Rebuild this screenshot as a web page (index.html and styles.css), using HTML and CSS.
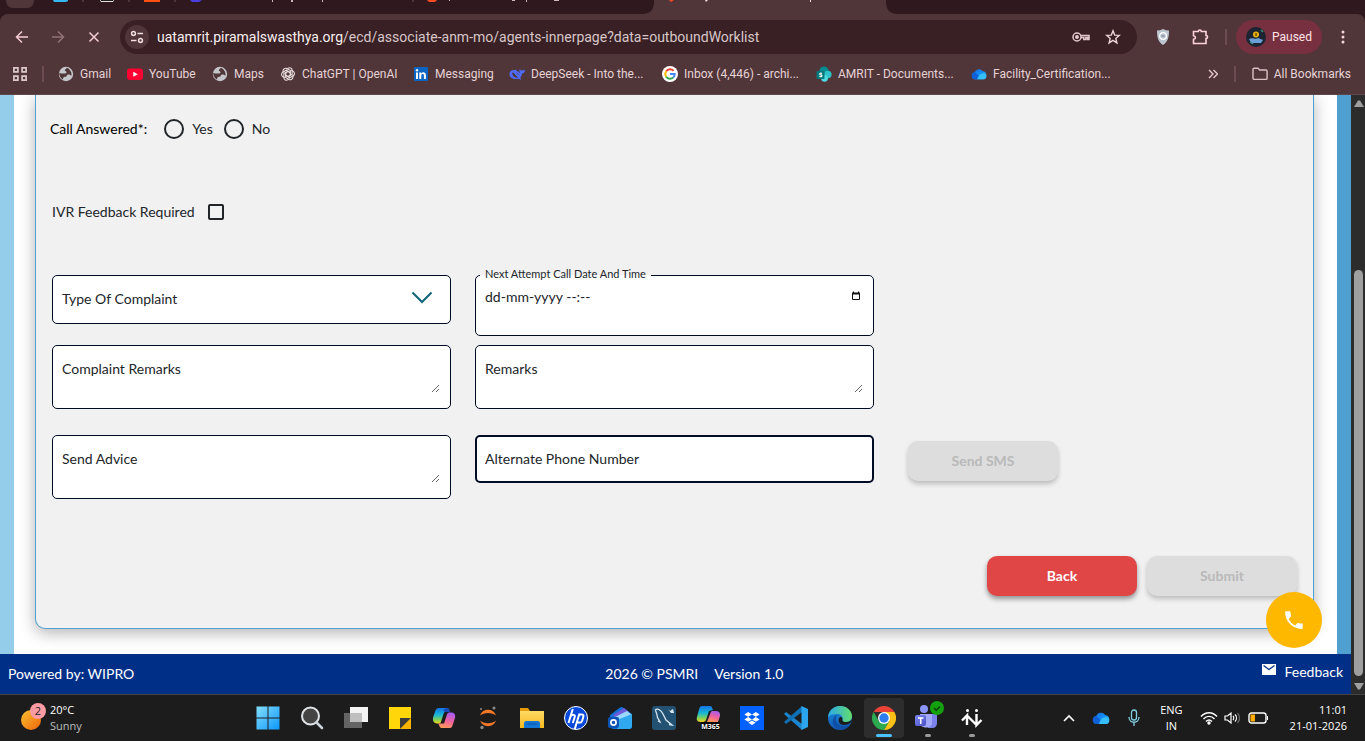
FILE: index.html
```html
<!DOCTYPE html>
<html lang="en">
<head>
<meta charset="utf-8">
<meta name="viewport" content="width=device-width, initial-scale=1">
<title>AMRIT - Outbound Worklist</title>
<link rel="stylesheet" href="styles.css">
</head>
<body>
<svg class="defs" width="0" height="0" aria-hidden="true">
  <defs>
    <linearGradient id="sun" x1="0" y1="0" x2="1" y2="1"><stop offset="0" stop-color="#f9c032"/><stop offset="1" stop-color="#f0640a"/></linearGradient>
    <linearGradient id="win" x1="0" y1="0" x2="1" y2="1"><stop offset="0" stop-color="#84deff"/><stop offset="1" stop-color="#0c98fa"/></linearGradient>
    <linearGradient id="cloud" x1="0" y1="0" x2="1" y2="1"><stop offset="0" stop-color="#1668dc"/><stop offset=".5" stop-color="#138df5"/><stop offset="1" stop-color="#3fd0fb"/></linearGradient>
    <linearGradient id="copA" x1="0" y1="0" x2="0" y2="1"><stop offset="0" stop-color="#1473e6"/><stop offset=".45" stop-color="#19b8d4"/><stop offset=".75" stop-color="#7fd05a"/><stop offset="1" stop-color="#f5d21f"/></linearGradient>
    <linearGradient id="copB" x1="0.6" y1="0" x2="0.3" y2="1"><stop offset="0" stop-color="#a65cf0"/><stop offset=".5" stop-color="#f0629d"/><stop offset="1" stop-color="#ff9c55"/></linearGradient>
    <linearGradient id="edgeA" x1="0" y1="0" x2="1" y2="0"><stop offset="0" stop-color="#2aa9e8"/><stop offset="1" stop-color="#62dd6e"/></linearGradient>
    <linearGradient id="edgeB" x1="0" y1="0" x2="0" y2="1"><stop offset="0" stop-color="#1a8fdc"/><stop offset="1" stop-color="#1358b4"/></linearGradient>
    <linearGradient id="folder" x1="0" y1="0" x2="0" y2="1"><stop offset="0" stop-color="#ffda66"/><stop offset="1" stop-color="#f9b91e"/></linearGradient>
    <linearGradient id="teams" x1="0" y1="0" x2="1" y2="1"><stop offset="0" stop-color="#7c87f2"/><stop offset="1" stop-color="#4a4fc4"/></linearGradient>
  </defs>
  <symbol id="globe" viewBox="0 0 16 16"><circle cx="8" cy="8" r="7.2" fill="#c4c6ca"/><path d="M8.800 1.800c-.4 1.300-1.600 1.300-2 2.300-.3 1 1 1 1.600 1.700.5.8-.2 1.600-1.200 1.700H3.500L1.200 7C1.200 10 3 12.600 5 13.600c.2-1.400 0-2.300 1.200-2.700 1-.3 2.300 0 2.500-1.200.2-1 1.300-1.200 2.600-1.100 1.200.1 1 1.100 2.200.8.5-3-1.500-6.400-4.700-7.600z" fill="#503539"/></symbol>
  <symbol id="onecloud" viewBox="0 0 18 14"><path d="M5 13a4 4 0 0 1-.8-7.900A5 5 0 0 1 13.200 4 4.600 4.600 0 0 1 14 13z" fill="url(#cloud)"/><path d="M4.500 5 13 13H5A4 4 0 0 1 4.500 5z" fill="#0f5fd6"/><path d="M7 13c1-4 3.500-7 8-6.600 3.500 1.600 2.600 6.600-1 6.600z" fill="#35bff8"/></symbol>
</svg>

<header class="browser">
  <div class="tabs" aria-hidden="true">
    <svg width="900" height="14" viewBox="0 0 900 14">
      <path d="M6 0h28c0 5-3 8-7 8H13c-4 0-7-3-7-8z" fill="#503539"/>
      <path d="M53 0h15v1l-2 1H54z" fill="#35b8ef"/>
      <path d="M100 0h14l-1 2h-12z" fill="#e8dfe0"/><path d="M101 0h12v1h-12z" fill="#1b1b1b"/>
      <path d="M144 0h16v2h-16z" fill="#ff5110"/>
      <path d="M190 0h12l-3 2h-7z" fill="#4a3fe0"/>
      <path d="M427 0h10l-2 2h-6z" fill="#ff4a22"/>
      <path d="M82 0h2v2h-2zM128 0h2v2h-2zM174 0h2v2h-2zM412 0h2v2h-2z" fill="#503539"/>
      <path d="M272 0h1v2h-1zM291 0h2v2h-2zM322 0h1v2h-1zM449 0h1v1h-1zM512 0h3v1h-3zM526 0h1v2h-1zM554 0h5v1h-5z" fill="#cdb9bd"/>
      <path d="M642 14c8 0 12-4 12-12V0h232v2c0 8 4 12 12 12z" fill="#503539"/>
      <path d="M669 0h5l-3 2z" fill="#ff4a22"/><path d="M705 0h3l-2 2zM810 0h1v2h-1z" fill="#f0e0e2"/>
    </svg>
  </div>
  <div class="toolbar">
    <button class="tool" aria-label="Back to previous page"><svg width="16" height="16" viewBox="0 0 16 16"><path d="M14 8H3M8 2.500 2.500 8 8 13.500" class="pink"/></svg></button>
    <button class="tool dim" aria-label="Forward"><svg width="16" height="16" viewBox="0 0 16 16"><path d="M2 8h11M8 2.500 13.500 8 8 13.500" class="pink"/></svg></button>
    <button class="tool" aria-label="Stop loading"><svg width="16" height="16" viewBox="0 0 16 16"><path d="m3.500 3.500 9 9m0-9-9 9" class="pink"/></svg></button>
    <div class="omnibox">
      <button class="site" aria-label="Site information"><svg width="14" height="14" viewBox="0 0 14 14" fill="none" stroke="#f1dfe1" stroke-width="1.500"><circle cx="3.500" cy="3.500" r="1.900"/><path d="M7.500 3.500H13M1 10.500h5.500"/><circle cx="10.500" cy="10.500" r="1.900"/></svg></button>
      <span class="url"><b>uatamrit.piramalswasthya.org</b>/ecd/associate-anm-mo/agents-innerpage?data=outboundWorklist</span>
      <button class="tool" aria-label="Passwords"><svg width="18" height="16" viewBox="0 0 18 16" fill="none" stroke="#e3c9cd" stroke-width="1.500"><circle cx="5" cy="8" r="4"/><circle cx="5" cy="8" r="1.200" fill="#e3c9cd"/><path d="M9 6.500h8v4h-1.500v-2h-1.700v2h-2v-2H9"/></svg></button>
      <button class="tool" aria-label="Bookmark this page"><svg width="16" height="16" viewBox="0 0 16 16" fill="none" stroke="#ecd3d7" stroke-width="1.400"><path d="m8 1.800 1.700 4.300 4.600.3-3.500 3 1.100 4.500L8 11.400l-3.900 2.500 1.100-4.500-3.500-3 4.600-.3z"/></svg></button>
    </div>
    <div class="extensions">
      <button class="tool" aria-label="Shield extension"><svg width="16" height="18" viewBox="0 0 16 18"><path d="M8 1c2 1 4 1.500 6 1.500 0 7-1 11-6 14.500C3 13.500 2 9.500 2 2.500 4 2.500 6 2 8 1z" fill="#bcc5cf"/><circle cx="8" cy="8" r="3.400" fill="none" stroke="#fff" stroke-width="1.200"/><path d="M6.500 8h3" stroke="#6d7b8c"/></svg></button>
      <button class="tool" aria-label="Extensions"><svg width="18" height="18" viewBox="0 0 18 18" fill="none" stroke="#ffd3dc" stroke-width="1.600"><path d="M2.500 3.500h4.800a1.500 1.500 0 0 1 3 0h4.700v4a1.500 1.500 0 0 1 0 3.100v4.900H2.500v-4.200c2.600-.5 2.600-3.100 0-3.600z"/></svg></button>
      <span class="divider"></span>
      <button class="profile"><svg width="20" height="20" viewBox="0 0 20 20"><circle cx="10" cy="10" r="10" fill="#1b2430"/><path d="M3 12c4-2 6 1 9-1l5 2-2 3H5z" fill="#6aa0d8"/><circle cx="10" cy="7.500" r="3" fill="#e7b313"/><path d="M9.300 6h1.500v3H9.300z" fill="#6b4a00"/><path d="m15 3 2 2M4 15l3 2" stroke="#3f8d79" stroke-width="1.500"/></svg>Paused</button>
      <button class="tool menu" aria-label="Menu"><svg width="16" height="16" viewBox="0 0 16 16" fill="#f6d6dc"><circle cx="8" cy="3" r="1.500"/><circle cx="8" cy="8" r="1.500"/><circle cx="8" cy="13" r="1.500"/></svg></button>
    </div>
  </div>
  <nav class="bookmarks" aria-label="Bookmarks">
    <svg width="14" height="14" viewBox="0 0 14 14" fill="none" stroke="#dcc9cb" stroke-width="1.700"><path d="M.9.900h4v4h-4zM9.100.900h4v4h-4zM.9 9.100h4v4h-4zM9.100 9.100h4v4h-4z"/></svg>
    <span class="divider"></span>
    <div class="links">
      <a href="#"><svg width="16" height="16"><use href="#globe"/></svg>Gmail</a>
      <a href="#"><svg width="16" height="16" viewBox="0 0 16 16"><rect y="2.500" width="16" height="11.500" rx="3" fill="#ff0033"/><path d="m6.300 5.700 4.400 2.500-4.400 2.500z" fill="#fff"/></svg>YouTube</a>
      <a href="#"><svg width="16" height="16"><use href="#globe"/></svg>Maps</a>
      <a href="#"><svg width="16" height="16" viewBox="0 0 16 16" fill="none" stroke="#e8dcdd" stroke-width="1.100"><path id="petal" d="M8 5.400 5.600 6.800v4.600L9 13.400c2 1 4-.4 4-2.400V9"/><use href="#petal" transform="rotate(60 8 8)"/><use href="#petal" transform="rotate(120 8 8)"/><use href="#petal" transform="rotate(180 8 8)"/><use href="#petal" transform="rotate(240 8 8)"/><use href="#petal" transform="rotate(300 8 8)"/></svg>ChatGPT | OpenAI</a>
      <a href="#"><svg width="16" height="16" viewBox="0 0 16 16"><rect x="1" y="1" width="14" height="14" rx="1" fill="#0a66c2"/><path d="M3 6.500h2V13H3zM6.300 6.500h1.900v.9c1.300-1.800 4.700-1.300 4.700 1.700V13h-2V9.500c0-2-2.600-1.800-2.600 0V13h-2z" fill="#fff"/><circle cx="4" cy="4.200" r="1.200" fill="#fff"/></svg>Messaging</a>
      <a href="#"><svg width="16" height="16" viewBox="0 0 16 16"><path d="M.5 8C.5 5 3 3.500 6 4l1.500-.8L7 4.500c2 .5 3 2 4 3C10 5.500 10.500 4 10.800 3.300c.5 1 1.500 1.300 2.200 1.200L16 3.800c0 2.400-1.300 3.600-3 3.700-.2 2-.8 3.400-2 4.400l1.500 1-1 .6-2.300-.8C5 14 .5 12 .5 8z" fill="#4d6bfe"/><path d="M3 6.500c2.500 0 3.800 3.500 6 5-3 .8-5.800-1-6-5zm4.500.2c1.200 0 2 1 2 2.300" fill="#503539"/></svg>DeepSeek - Into the...</a>
      <a href="#"><svg width="16" height="16" viewBox="0 0 16 16"><circle cx="8" cy="8" r="8" fill="#fff"/><g fill="none" stroke-width="2"><path d="M4.200 5.300A4.700 4.700 0 0 1 11.600 4.900" stroke="#ea4335"/><path d="M4.200 10.700a4.700 4.700 0 0 1 0-5.400" stroke="#fbbc05"/><path d="M11.300 11.400a4.700 4.700 0 0 1-7.100-.7" stroke="#34a853"/><path d="M8 8h4.700a4.500 4.500 0 0 1-1.400 3.400" stroke="#4285f4"/></g></svg>Inbox (4,446) - archi...</a>
      <a href="#"><svg width="16" height="16" viewBox="0 0 16 16"><circle cx="8" cy="5" r="4.600" fill="#058b92"/><circle cx="11.800" cy="8.500" r="3.800" fill="#2fc2c9"/><circle cx="8.500" cy="12.300" r="3.400" fill="#4fdbe0"/><rect x=".5" y="5" width="8" height="8" rx="1" fill="#03787c"/><path d="M6 7.500c-1-.7-2.500-.3-2.300.6.200 1 2.300.6 2.300 1.700 0 1-1.700 1.200-2.600.5" fill="none" stroke="#fff" stroke-width="1.100"/></svg>AMRIT - Documents...</a>
      <a href="#"><svg width="16" height="14"><use href="#onecloud"/></svg>Facility_Certification...</a>
    </div>
    <div class="more">
      <svg width="10" height="10" viewBox="0 0 10 10" fill="none" stroke="#e6c9ce" stroke-width="1.400"><path d="m1 1 4 4-4 4M5.500 1l4 4-4 4"/></svg>
      <span class="divider"></span>
      <a href="#"><svg width="16" height="14" viewBox="0 0 16 14" fill="none" stroke="#d9c2c6" stroke-width="1.400"><path d="M1 2.500c0-.8.500-1.200 1.200-1.200H6L7.700 3h6.200c.7 0 1.200.5 1.200 1.200v7c0 .7-.5 1.200-1.200 1.200H2.200c-.7 0-1.200-.5-1.200-1.200z"/></svg>All Bookmarks</a>
    </div>
  </nav>
</header>

<div class="viewport">
  <div class="app">
    <main class="sheet">
      <form class="card">
        <div class="answered" role="radiogroup" aria-labelledby="answered-label">
          <span id="answered-label">Call Answered*:</span>
          <label><input type="radio" name="answered">Yes</label>
          <label><input type="radio" name="answered">No</label>
        </div>
        <label class="ivr"><span>IVR Feedback Required</span><input type="checkbox"></label>
        <div class="fields">
          <div class="box select">
            <select aria-label="Type Of Complaint"><option>Type Of Complaint</option></select>
            <svg width="22" height="14" viewBox="0 0 22 14" fill="none" stroke="#0d6577" stroke-width="2"><path d="m1.500 1.500 9.500 9.500 9.500-9.500"/></svg>
          </div>
          <fieldset class="date">
            <legend><label for="next">Next Attempt Call Date And Time</label></legend>
            <input id="next" type="text" placeholder="dd-mm-yyyy --:--">
            <button type="button" aria-label="Open calendar"><svg width="10" height="10" viewBox="0 0 10 10"><path d="M1.500 2.500h7v6h-7z" fill="none" stroke="#111"/><path d="M1 1.500h8v2H1zM2 .5h1v1H2zM7 .5h1v1H7z" fill="#111"/></svg></button>
          </fieldset>
          <div class="box area second"><textarea rows="2" placeholder="Complaint Remarks" aria-label="Complaint Remarks"></textarea></div>
          <div class="box area second"><textarea rows="2" placeholder="Remarks" aria-label="Remarks"></textarea></div>
          <div class="box area third"><textarea rows="2" placeholder="Send Advice" aria-label="Send Advice"></textarea></div>
          <div class="third"><input class="phone" type="tel" placeholder="Alternate Phone Number" aria-label="Alternate Phone Number"></div>
          <div class="third sms"><button type="button" class="btn" disabled>Send SMS</button></div>
        </div>
        <div class="actions">
          <button type="button" class="btn back">Back</button>
          <button type="submit" class="btn" disabled>Submit</button>
        </div>
      </form>
    </main>
    <footer class="footer">
      <span>Powered by: WIPRO</span>
      <span class="center"><span>2026 © PSMRI</span><span>Version 1.0</span></span>
      <a href="#"><svg width="14" height="12" viewBox="0 0 14 12"><path d="M0 1h14v11H0z" fill="#fff"/><path d="m1.500 2.500 5.500 4 5.500-4" fill="none" stroke="#002f88" stroke-width="1.300"/></svg>Feedback</a>
    </footer>
    <button class="fab" aria-label="Call"><svg width="20" height="20" viewBox="0 0 20 20"><path d="M4.600 8.900a14 14 0 0 0 6.500 6.500l2.200-2.200c.3-.3.700-.3 1-.2 1 .4 2.200.6 3.400.6.600 0 1 .4 1 1v3.300c0 .6-.4 1-1 1C8.700 18.900 1.100 11.300 1.100 2.300c0-.6.4-1 1-1h3.400c.6 0 1 .4 1 1 0 1.200.2 2.400.6 3.400.1.300 0 .7-.3 1z" fill="#fff"/></svg></button>
  </div>
  <div class="scrollbar" aria-hidden="true">
    <svg width="10" height="7" viewBox="0 0 10 7"><path d="M4 .5h2L10 7H0z" fill="#9f9f9f"/></svg>
    <div class="track"><div class="thumb"></div></div>
    <svg width="10" height="7" viewBox="0 0 10 7"><path d="M0 0h10L6 6.500H4z" fill="#9f9f9f"/></svg>
  </div>
</div>

<div class="taskbar">
  <div class="weather">
    <svg width="28" height="30" viewBox="0 0 28 30"><circle cx="11" cy="17" r="10" fill="url(#sun)"/><circle cx="18" cy="8" r="8" fill="#ff9ba2"/><text x="18" y="12" text-anchor="middle" class="count">2</text></svg>
    <div><span>20°C</span><span class="sub">Sunny</span></div>
  </div>
  <div class="apps">
    <button aria-label="Start"><svg width="24" height="24" viewBox="0 0 24 24"><path d="M.5.500h11v11H.5zM12.500.500h11v11h-11zM.5 12.500h11v11H.5zM12.500 12.500h11v11h-11z" fill="url(#win)"/></svg></button>
    <button aria-label="Search"><svg width="24" height="24" viewBox="0 0 24 24"><circle cx="10.500" cy="10" r="8.500" fill="#444" stroke="#dfe3e6" stroke-width="2"/><path d="m16.500 16.500 5.500 5.500" stroke="#cfd4d8" stroke-width="2.500" stroke-linecap="round"/></svg></button>
    <button aria-label="Task view"><svg width="24" height="24" viewBox="0 0 24 24"><path d="M0 7h18v15H0z" fill="#646464"/><path d="M6 1h18v15H6z" fill="#f3f3f3"/><path d="M6 7h12v9H6z" fill="#bfbfbf"/></svg></button>
    <button aria-label="Sticky Notes"><svg width="24" height="24" viewBox="0 0 24 24"><path d="M1 1h22v11L12 23H1z" fill="#ffd60a"/><path d="M12 12h11L12 23z" fill="#3d3c3a"/><path d="M23 12v11H12z" fill="#f8b400"/></svg></button>
    <button aria-label="Copilot"><svg width="24" height="24" viewBox="0 0 24 24"><path d="M7 2h8c1.500 0 2 1 2.500 2.500L12 6.500 9 16c-.5 1-1.500 1.500-3 1.500C3 17.500 0 16 1.200 11L3.500 4.500C4 3 5 2 7 2z" fill="url(#copA)"/><path d="M15 2c2 0 2 3 3.500 4H13l-2-2z" fill="#1a48b8"/><path d="M17 6.500h2c3 0 5 2 4 5.500l-2.500 7.500C20 21.500 19 22 17 22H9.500c-2 0-2-3-3.500-4.500l6 0L15 8.500c.3-1 1-2 2-2z" fill="url(#copB)"/></svg></button>
    <button aria-label="Jupyter"><svg width="24" height="24" viewBox="0 0 24 24"><path d="M4 9.500a8.500 8.500 0 0 1 16 0c-4-3.500-12-3.500-16 0zM4 14.500c4 3.500 12 3.500 16 0a8.500 8.500 0 0 1-16 0z" fill="#f37726"/><g fill="#8b8b8b"><circle cx="18" cy="2" r="1.500"/><circle cx="6" cy="21.500" r="1.700"/><circle cx="5" cy="3" r="1"/></g></svg></button>
    <button aria-label="File Explorer"><svg width="24" height="24" viewBox="0 0 24 24"><path d="M0 2h8l2 3v5H0z" fill="#e39b0d"/><path d="M0 5h24v17H0z" fill="url(#folder)"/><path d="M4 22v-5c0-1 1-2 2-2h12c1 0 2 1 2 2v5z" fill="#1476d2"/><path d="M7 18h10" stroke="#0b559f"/></svg></button>
    <button aria-label="HP"><svg width="24" height="24" viewBox="0 0 24 24"><circle cx="12" cy="12" r="11.500" fill="#0849dc" stroke="#fff"/><path d="M8.800 3 4.500 17M6.500 10.500c2-2.500 5-2 4.200.5L8.800 17M15.500 7.500 10.800 23M15 8.500h3c2 0 1.500 1.500 1 3.500s-1.300 4.500-2.500 4.500h-3.200" fill="none" stroke="#fff" stroke-width="2"/></svg></button>
    <button aria-label="Outlook"><svg width="24" height="24" viewBox="0 0 24 24"><path d="m2 9 10-7.500c1-.7 2-.7 3 0L24 8v12c0 2-1 3-3 3H6c-2 0-4-1-4-3z" fill="#0f6fd6"/><path d="m5 9 11-7 5 4-11 8z" fill="#6d5bd8"/><path d="m7 11 12-6 5 4-10 8z" fill="#9bd7ff"/><path d="m9 14 15-6v12c0 2-1 3-3 3H9z" fill="#30a8f0"/><rect y="11" width="11" height="11" rx="2" fill="#0b53b5"/><circle cx="5.500" cy="16.500" r="2.600" fill="none" stroke="#fff" stroke-width="1.700"/></svg></button>
    <button aria-label="MySQL Workbench"><svg width="24" height="24" viewBox="0 0 24 24"><rect width="24" height="24" rx="3" fill="#235172"/><path d="M3 4c3-2 6 0 8 4l3 6 6 5-3-.5M3.500 4.500c1 2 1.500 4 2 7L8 16l-2-1" fill="none" stroke="#d7e8f3" stroke-width="1.300"/><path d="m16 3 2 2 3-2 1 4-3 0z" fill="#dce9f2"/></svg></button>
    <button aria-label="Microsoft 365"><svg width="24" height="24" viewBox="0 0 24 24"><path d="M6 0h8c2 0 2 2 3 4l-4 1-3 9c-.5 1.500-2 2-4 2-4 0-6-1-5-5l2-7.500C3.500 1 4.500 0 6 0z" fill="url(#copA)"/><path d="M17 5h3c3 0 4.500 2 4 5l-2 6H11l3.500-9c.5-1.500 1-2 2.500-2z" fill="url(#copB)"/><path d="M5 16h19v8H5z" fill="#080808"/><text x="14.500" y="23" text-anchor="middle" class="m365">M365</text></svg></button>
    <button aria-label="Dropbox"><svg width="24" height="24" viewBox="0 0 24 24"><path d="M0 0h24v24H0z" fill="#0061fe"/><path d="m8.200 6 3.800 2.400-3.800 2.400-3.800-2.400zM15.800 6l3.800 2.400-3.800 2.400L12 8.400zM8.200 11l3.800 2.400-3.800 2.400-3.800-2.400zM15.800 11l3.800 2.400-3.800 2.400-3.800-2.400zM12 14.500l3.600 2.300-3.600 2.300-3.600-2.300z" fill="#fff"/></svg></button>
    <button aria-label="Visual Studio Code"><svg width="24" height="24" viewBox="0 0 24 24"><path d="m0 8 2-2 16 12v6z" fill="#1b85cf"/><path d="m0 16 2 2L18 6V0z" fill="#0f6fb4"/><path d="m17.500 0 6.500 3v18l-6.500 3z" fill="#2ba5ee"/></svg></button>
    <button aria-label="Edge"><svg width="24" height="24" viewBox="0 0 24 24"><circle cx="12" cy="12" r="12" fill="url(#edgeB)"/><path d="M0 11C1 4 6 0 12 0c7 0 12 5 12 10 0 4-3 6-6 6-4 0-4-1.500-3.500-3 .5-3-2-5-5.500-5C5 8 1.500 9 0 11z" fill="url(#edgeA)"/><path d="M9 9c-3 4-1 11 7 11 2 0 4-.5 6.500-2C19 24 12 25 8 22c-5-4-4-11 1-13z" fill="#0f4fa6"/><path d="M14.500 13c-.5 1.500 0 3 3.500 3s5-1 6-3c0 3-3 6-8 6s-7-5-4-8c1.500 0 2.500.5 2.500 2z" fill="#1c1c1c"/></svg></button>
    <button class="active" aria-label="Chrome"><svg width="24" height="24" viewBox="0 0 24 24"><path d="M1.600 6A12 12 0 0 1 22.400 6H12z" fill="#ea4335"/><path d="M22.400 6A12 12 0 0 1 12 24l5.200-9L12 6z" fill="#fbc116"/><path d="M1.600 6A12 12 0 0 0 12 24l5.200-9H6.800z" fill="#2da94f"/><circle cx="12" cy="12" r="6" fill="#fff"/><circle cx="12" cy="12" r="4.700" fill="#2f7cf0"/></svg></button>
    <button class="open" aria-label="Teams"><svg class="teams" width="32" height="28" viewBox="0 0 32 28"><circle cx="12" cy="8" r="4" fill="#8d96f6"/><path d="M16 13h9v9c0 3-2 5-5 5h-4z" fill="#7b83eb"/><path d="M8 13h12v9c0 6-12 6-12 0z" fill="#a3a9fa"/><rect x="3" y="14" width="11" height="11" rx="2" fill="url(#teams)"/><path d="M6 17h5.500M8.700 17v6" stroke="#fff" stroke-width="1.500"/><circle cx="25" cy="7" r="7" fill="#13a10e"/><path d="m22 7 2.200 2.200L28 5.500" fill="none" stroke="#0b3d09" stroke-width="1.500"/></svg></button>
    <button class="open" aria-label="Exchange"><svg width="24" height="24" viewBox="0 0 24 24" fill="none" stroke="#fff" stroke-width="2.400"><path d="m2 14.500 5-5v9.500M7 9.500l9.500 9.500M16.500 8v11l5-5"/><g fill="#fff" stroke="none"><circle cx="7.500" cy="4.500" r="1.500"/><circle cx="16.500" cy="4.500" r="1.500"/></g></svg></button>
  </div>
  <div class="tray">
    <svg width="12" height="8" viewBox="0 0 12 8"><path d="m1 7 5-5 5 5" fill="none" stroke="#fff" stroke-width="1.600"/></svg>
    <svg width="18" height="14"><use href="#onecloud"/></svg>
    <svg width="14" height="18" viewBox="0 0 14 18" fill="none" stroke="#82cfe2" stroke-width="1.300"><rect x="4.500" y="1" width="5" height="10" rx="2.500"/><path d="M2 8c0 7 10 7 10 0M7 13.500V17"/></svg>
    <div class="lang"><span>ENG</span><span>IN</span></div>
    <div class="status">
      <svg width="18" height="14" viewBox="0 0 18 14" fill="none" stroke="#fff" stroke-width="1.400"><path d="M1 5.500c4.500-5 11.500-5 16 0M3.500 8c3-3.500 8-3.500 11 0M6 10.500c2-2 4-2 6 0"/><circle cx="9" cy="12" r="1" fill="#fff"/></svg>
      <svg width="18" height="14" viewBox="0 0 18 14" fill="none" stroke="#fff" stroke-width="1.200"><path d="M1 5h2.500L7 2v10L3.500 9H1zM9 5c1 1 1 3 0 4M11 3.500c2 2 2 5 0 7"/><path d="M13.500 2c2.500 3 2.500 7 0 10" stroke="#666"/></svg>
      <svg width="20" height="12" viewBox="0 0 20 12"><rect x="1" y="1" width="17" height="10" rx="2.500" fill="none" stroke="#fff" stroke-width="1.400"/><path d="M2.500 2.500H7v7H2.500z" fill="#ffab00"/><path d="M19.500 4v4" stroke="#fff"/></svg>
    </div>
    <div class="clock"><span>11:01</span><span>21-01-2026</span></div>
  </div>
</div>
</body>
</html>
```
FILE: styles.css
```css
* { box-sizing: border-box; }

body {
  margin: 0;
  min-height: 100vh;
  display: flex;
  flex-direction: column;
  font-family: Lato, "Liberation Sans", sans-serif;
  font-size: 14px;
  color: #212529;
}

button, input, select, textarea { font: inherit; color: inherit; }
button { border: 0; padding: 0; background: none; }
a { color: inherit; text-decoration: none; }
svg { flex: none; display: block; }
fieldset { border: 0; margin: 0; padding: 0; min-width: 0; }
.defs { position: absolute; }

/* Browser chrome */
.browser {
  background: #2f191e;
  font-family: Roboto, "Open Sans", sans-serif;
  font-size: 12px;
  color: #e6d3d5;
}
.tabs { height: 14px; overflow: hidden; }
.toolbar {
  display: flex;
  align-items: center;
  gap: 8px;
  padding: 6px 8px 0;
  background: #503539;
  border-radius: 8px 8px 0 0;
}
.tool { width: 28px; height: 28px; display: flex; align-items: center; justify-content: center; }
.dim { opacity: 0.4; }
.pink { fill: none; stroke: #f5cdd5; stroke-width: 1.5; }
.omnibox {
  flex: 1;
  min-width: 0;
  height: 34px;
  margin-left: 4px;
  padding: 0 10px 0 5px;
  display: flex;
  align-items: center;
  gap: 4px;
  border-radius: 17px;
  background: #382024;
}
.site {
  flex: none;
  width: 24px;
  height: 24px;
  border-radius: 12px;
  background: #503539;
  display: flex;
  align-items: center;
  justify-content: center;
}
.url {
  flex: 1;
  min-width: 0;
  padding-left: 4px;
  font-size: 14px;
  color: #d9c6c8;
  white-space: nowrap;
  overflow: hidden;
}
.url b { font-weight: 400; color: #fbeff0; }
.extensions { display: flex; align-items: center; gap: 9px; margin-left: 4px; }
.extensions > .divider { margin-left: 2px; }
.divider { width: 2px; height: 16px; background: #6c4c52; flex: none; }
.profile {
  height: 34px;
  width: 86px;
  padding-left: 10px;
  display: flex;
  align-items: center;
  gap: 6px;
  border-radius: 17px;
  background: #76303f;
  color: #ffe3e8;
}
.extensions .menu { margin-left: -2px; }
.bookmarks {
  display: flex;
  align-items: center;
  height: 41px;
  padding: 0 14px 1px 13px;
  background: #503539;
  border-bottom: 1px solid #5f474b;
}
.bookmarks > .divider { margin: 0 14px 0 15px; }
.bookmarks a { display: flex; align-items: center; gap: 6px; white-space: nowrap; }
.links {
  display: grid;
  grid-template-columns: 69px 85px 68px 133px 96px 153px 154px 155px auto;
}
.more { display: flex; align-items: center; gap: 16px; margin-left: auto; }

/* Application page */
.viewport { flex: 1; display: flex; }
.app { flex: 1; min-width: 0; display: flex; flex-direction: column; position: relative; }
.sheet {
  flex: 1;
  display: flex;
  overflow: hidden;
  border-left: 14px solid #94cde9;
  border-right: 14px solid #4fa0d1;
  background: #fff;
  padding: 0 23px 25px 21px;
}
.card {
  flex: 1;
  min-width: 0;
  display: flex;
  flex-direction: column;
  padding: 24px 16px 32px;
  border: 1px solid #4ea1d1;
  border-top: 0;
  border-radius: 0 0 10px 10px;
  background: #f1f1f1;
  box-shadow: 0 4px 16px rgba(0, 0, 0, 0.3);
}
.answered { display: flex; align-items: center; height: 20px; margin-left: -2px; color: #000; }
.answered label { display: flex; align-items: center; gap: 8px; margin-left: 11px; line-height: 18px; color: #212529; }
.answered span { margin-right: 6px; padding-bottom: 2px; }
input[type="radio"], input[type="checkbox"] {
  appearance: none;
  margin: 0;
  border: 2px solid #212529;
  width: 20px;
  height: 20px;
  border-radius: 50%;
}
input[type="checkbox"] { width: 16px; height: 16px; border-radius: 2px; }
.ivr { display: flex; align-items: center; align-self: flex-start; gap: 13px; height: 20px; margin-top: 63px; }
.ivr span { padding-bottom: 2px; }
.fields {
  display: grid;
  grid-template-columns: repeat(3, minmax(0, 1fr));
  column-gap: 24px;
  align-items: start;
  margin-top: 53px;
}
.box { border: 1px solid #000b24; border-radius: 5px; background: #fff; }
.select { position: relative; height: 49px; }
.select select {
  appearance: none;
  display: block;
  width: 100%;
  height: 47px;
  padding: 0 9px 2px;
  border: 0;
  border-radius: 5px;
  background: transparent;
}
.select svg { position: absolute; right: 17px; top: 15px; pointer-events: none; }
.date {
  display: flex;
  align-items: flex-start;
  height: 69px;
  margin-top: -8px;
  padding: 0 12px 0 9px;
  border: 1px solid #000b24;
  border-radius: 5px;
  background: #fff;
}
.date legend {
  margin-left: -5px;
  padding: 0 5px 2px;
  font-size: 11px;
  line-height: 14px;
}
.date input { flex: 1; min-width: 0; border: 0; padding: 0; height: 18px; margin-top: 4px; background: none; }
.date button { margin-top: 8px; }
::placeholder { color: #212529; opacity: 1; }
.second { grid-row: 2; margin-top: 9px; }
.third { grid-row: 3; margin-top: 26px; }
.area { padding: 15px 10px 15px 9px; }
.area textarea {
  display: block;
  width: 100%;
  height: 32px;
  min-height: 32px;
  border: 0;
  padding: 0;
  line-height: 16px;
  background: transparent;
}
.phone {
  display: block;
  width: 100%;
  height: 48px;
  padding: 0 8px 2px;
  border: 2px solid #000b24;
  border-radius: 5px;
  background: #fff;
}
.sms { padding: 6px 10px 0; }
.btn {
  display: block;
  width: 150px;
  height: 40px;
  padding-bottom: 2px;
  border-radius: 10px;
  background: #ddd;
  color: #b9b9b9;
  font-weight: 700;
  box-shadow: 0 3px 5px rgba(0, 0, 0, 0.22);
}
.back { background: #e04646; color: #fff; box-shadow: 0 3px 5px rgba(0, 0, 0, 0.4); }
.actions { display: flex; justify-content: flex-end; gap: 10px; margin-top: 57px; }
.footer {
  display: flex;
  align-items: center;
  justify-content: space-between;
  height: 40px;
  padding: 0 8px 2px;
  background: #002f88;
  color: #fff;
}
.footer .center { display: flex; gap: 16px; margin-right: 8px; }
.footer a { display: flex; gap: 8px; padding-bottom: 4px; }
.fab {
  position: absolute;
  right: 29px;
  bottom: 46px;
  width: 56px;
  height: 56px;
  border-radius: 50%;
  background: #ffb800;
  display: flex;
  align-items: center;
  justify-content: center;
}
.scrollbar {
  width: 14px;
  padding: 5px 2px 4px 3px;
  display: flex;
  flex-direction: column;
  background: #2c2c2c;
}
.track { flex: 1; display: flex; padding: 163px 0 7px; }
.thumb { flex: 1; border-radius: 5px; background: #9f9f9f; }

/* Taskbar */
.taskbar {
  display: flex;
  align-items: center;
  height: 47px;
  padding-right: 18px;
  border-top: 1px solid #444;
  background: #1c1c1c;
  color: #fff;
  font-family: "Open Sans", "Noto Sans", sans-serif;
  font-size: 11px;
  line-height: 16px;
}
.taskbar span { display: block; }
.weather { width: 248px; padding-left: 20px; display: flex; align-items: center; gap: 2px; }
.sub { color: #bdbdbd; }
.count { font-size: 11px; fill: #222; }
.apps { display: flex; gap: 4px; }
.apps button {
  position: relative;
  width: 40px;
  height: 40px;
  border-radius: 4px;
  display: flex;
  align-items: center;
  justify-content: center;
}
.apps .active { background: #2d2d2d; }
.apps .active::after, .apps .open::after {
  content: "";
  position: absolute;
  bottom: 1px;
  width: 6px;
  height: 3px;
  border-radius: 2px;
  background: #9a9a9a;
}
.apps .active::after { width: 16px; background: #4cc2ff; }
.teams { margin-bottom: 6px; }
.m365 { font-size: 7px; font-weight: 700; fill: #fff; }
.tray { display: flex; align-items: center; margin-left: auto; gap: 17px; }
.lang { text-align: center; margin-left: 2px; }
.status { display: flex; align-items: center; gap: 6px; margin-right: 5px; }
.clock { text-align: right; }
```
